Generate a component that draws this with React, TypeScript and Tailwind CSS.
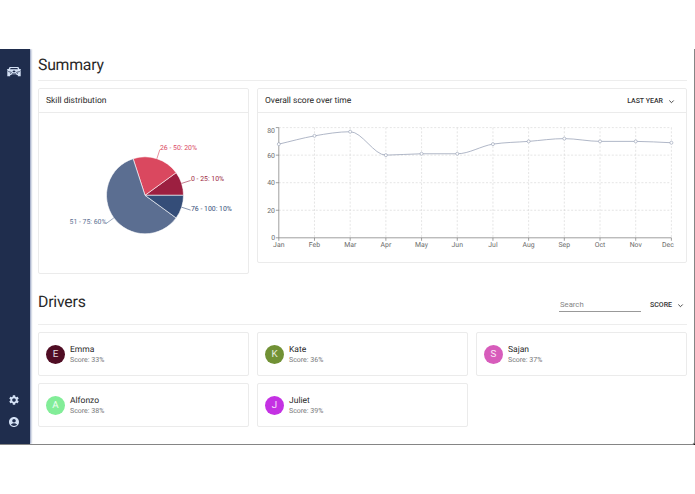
import type { FC, ReactNode } from 'react';
import { MdAccountCircle, MdSettings } from 'react-icons/md';

interface Driver {
  name: string;
  score: number;
  color: string;
}

const drivers: Driver[] = [
  { name: 'Emma', score: 33, color: 'bg-[#500d24]' },
  { name: 'Kate', score: 36, color: 'bg-[#719135]' },
  { name: 'Sajan', score: 37, color: 'bg-[#d75cbb]' },
  { name: 'Alfonzo', score: 38, color: 'bg-[#82ed98]' },
  { name: 'Juliet', score: 39, color: 'bg-[#c431e3]' },
];

const history = [
  { month: 'Jan', score: 68 },
  { month: 'Feb', score: 74 },
  { month: 'Mar', score: 77 },
  { month: 'Apr', score: 60 },
  { month: 'May', score: 61 },
  { month: 'Jun', score: 61 },
  { month: 'Jul', score: 68 },
  { month: 'Aug', score: 70 },
  { month: 'Sep', score: 72 },
  { month: 'Oct', score: 70 },
  { month: 'Nov', score: 70 },
  { month: 'Dec', score: 69 },
];

const skills = [
  { label: '0 - 25', value: 10, color: '#9c1f40', x: 152, y: 67.8, anchor: 'start' },
  { label: '26 - 50', value: 20, color: '#da485f', x: 121, y: 36.8, anchor: 'start' },
  { label: '51 - 75', value: 60, color: '#5b6e91', x: 67.5, y: 111.2, anchor: 'end' },
  { label: '76 - 100', value: 10, color: '#344d78', x: 152, y: 97.6, anchor: 'start' },
] as const;

const polar = (radius: number, percent: number) => {
  const angle = (percent / 100) * Math.PI * 2;
  return { x: 106 + radius * Math.cos(angle), y: 82.3 - radius * Math.sin(angle) };
};

const SkillChart: FC = () => {
  let total = 0;
  return (
    <svg width="209" height="160" viewBox="0 0 209 160" className="block">
      {skills.map((skill) => {
        const start = polar(38.5, total);
        const end = polar(38.5, total + skill.value);
        const edge = polar(38.5, total + skill.value / 2);
        const outer = polar(48, total + skill.value / 2);
        total += skill.value;
        return (
          <g key={skill.label}>
            <path
              d={`M106 82.3L${start.x} ${start.y}A38.5 38.5 0 ${skill.value > 50 ? 1 : 0} 0 ${end.x} ${end.y}Z`}
              fill={skill.color}
              stroke="#fff"
              strokeWidth="0.6"
            />
            <path
              d={`M${edge.x} ${edge.y}L${outer.x} ${outer.y}`}
              stroke={skill.color}
              strokeWidth="0.6"
            />
            <text
              x={skill.x}
              y={skill.y}
              textAnchor={skill.anchor}
              fill={skill.color}
              fontSize="6.9"
            >
              {`${skill.label}: ${skill.value}%`}
            </text>
          </g>
        );
      })}
    </svg>
  );
};

const LEFT = 20.8;
const TOP = 14.6;
const BOTTOM = 124.8;
const RIGHT = 413.4;
const STEP = (RIGHT - LEFT) / 11;

const points = history.map(({ score }, i) => ({
  x: LEFT + i * STEP,
  y: BOTTOM - (score / 80) * (BOTTOM - TOP),
}));

// monotone cubic interpolation
const tangents = points.map((p, i) => {
  const prev = points[i - 1];
  const next = points[i + 1];
  if (!prev || !next) return ((next ?? p).y - (prev ?? p).y) / STEP;
  const a = (p.y - prev.y) / STEP;
  const b = (next.y - p.y) / STEP;
  if (a * b <= 0) return 0;
  return Math.sign(a) * 2 * Math.min(Math.abs(a), Math.abs(b), Math.abs(a + b) / 4);
});

const linePath = points
  .map((p, i) => {
    if (i === 0) return `M${p.x} ${p.y}`;
    const prev = points[i - 1];
    const third = STEP / 3;
    return `C${prev.x + third} ${prev.y + tangents[i - 1] * third} ${p.x - third} ${p.y - tangents[i] * third} ${p.x} ${p.y}`;
  })
  .join('');

const ScoreChart: FC = () => (
  <svg width="428" height="149" viewBox="0 0 428 149" className="block">
    <g stroke="#d4d4d4" strokeWidth="0.6" strokeDasharray="2 1.7">
      {[20, 40, 60, 80].map((tick) => {
        const y = BOTTOM - (tick / 80) * (BOTTOM - TOP);
        return <path key={tick} d={`M${LEFT} ${y}H${RIGHT}`} />;
      })}
      {points.slice(1).map((p) => (
        <path key={p.x} d={`M${p.x} ${TOP}V${BOTTOM}`} />
      ))}
    </g>
    <g stroke="#777" strokeWidth="0.7" fill="none">
      <path d={`M${LEFT} ${TOP}V${BOTTOM}H${RIGHT}`} />
      {[0, 20, 40, 60, 80].map((tick) => (
        <path
          key={tick}
          d={`M${LEFT - 3} ${BOTTOM - (tick / 80) * (BOTTOM - TOP)}h3`}
        />
      ))}
      {points.map((p) => (
        <path key={p.x} d={`M${p.x} ${BOTTOM}v3`} />
      ))}
    </g>
    <g fill="#6b6b6b" fontSize="6.9">
      {[0, 20, 40, 60, 80].map((tick) => (
        <text
          key={tick}
          x="17"
          y={tick === 80 ? 19.8 : BOTTOM + 2.4 - (tick / 80) * (BOTTOM - TOP)}
          textAnchor="end"
        >
          {tick}
        </text>
      ))}
      {history.map(({ month }, i) => (
        <text
          key={month}
          x={i === 11 ? 410 : points[i].x}
          y="134"
          textAnchor="middle"
        >
          {month}
        </text>
      ))}
    </g>
    <path d={linePath} fill="none" stroke="#9ca5b9" strokeWidth="0.8" />
    {points.map((p) => (
      <circle
        key={p.x}
        cx={p.x}
        cy={p.y}
        r="1.5"
        fill="#fff"
        stroke="#939db3"
        strokeWidth="0.6"
      />
    ))}
  </svg>
);

interface PanelProps {
  title: string;
  action?: ReactNode;
  className: string;
  children: ReactNode;
}

const Panel: FC<PanelProps> = ({ title, action, className, children }) => (
  <section className={`rounded-[2px] border border-[#ebebeb] ${className}`}>
    <header className="flex h-6 items-center justify-between border-b border-[#ebebeb] pt-px pr-2.5 pl-[7px]">
      <h2 className="pt-px text-[8.5px]">{title}</h2>
      {action}
    </header>
    {children}
  </section>
);

const SortButton: FC<{ label: string }> = ({ label }) => (
  <button className="flex items-center gap-1 text-[7px] leading-3 font-medium text-[#333]">
    {label}
    <svg width="9" height="9" viewBox="0 0 9 9" fill="none">
      <path d="M2.3 3.5l2.2 2.2 2.2-2.2" stroke="currentColor" strokeWidth="0.9" />
    </svg>
  </button>
);

const CarLogo: FC = () => (
  <svg width="14" height="11" viewBox="0 0 14 11" fill="#d4e1f5">
    <path d="M2.6.9h8.8l1 2.2h1.4v1.3h-.7l.6.8v5h-2.9V9H3.2v1.2H.3v-5l.6-.8H.2V3.1h1.4z" />
    <path d="M3.6 2h6.8l.6 1.3H3z" fill="#1f2d4d" />
    <path
      d="M1.2 5.5l3.2.8-1 1.6M12.8 5.5l-3.2.8 1 1.6"
      fill="none"
      stroke="#1f2d4d"
      strokeWidth=".7"
    />
    <path d="M5.3 5.2q1.7-1.2 3.4 0L7.6 6.3H6.4zM4.2 8.8l1-1.3h3.6l1 1.3z" fill="#1f2d4d" />
  </svg>
);

const DriverCard: FC<{ driver: Driver }> = ({ driver }) => (
  <article className="flex items-center gap-[5px] rounded-[2px] border border-[#ebebeb] pl-[7px]">
    <div
      className={`flex size-[19px] items-center justify-center rounded-full pt-[2px] text-[9.8px] text-white/85 ${driver.color}`}
    >
      {driver.name[0]}
    </div>
    <div className="pt-px">
      <h3 className="text-[8.5px] leading-[12px]">{driver.name}</h3>
      <p className="text-[7px] leading-[9px] text-[#777]">Score: {driver.score}%</p>
    </div>
  </article>
);

export default function App() {
  return (
    <div className="h-[494px] w-[695px] bg-white pt-[49px] font-['Roboto',sans-serif] text-[#292929] [text-rendering:geometricPrecision]">
      <div className="bg-black">
        <div className="flex h-[396px] overflow-hidden rounded-br-[3px] border-r border-b border-[#858585] bg-white">
          <aside className="flex w-[30px] shrink-0 flex-col items-center bg-[#1f2d4d] pt-[17px] pr-0.5 pb-4 text-[#d4e1f5] shadow-[1px_0_2px_#8795b8]">
            <CarLogo />
            <div className="mt-auto flex flex-col gap-[10px]">
              <MdSettings size={12} />
              <MdAccountCircle size={12} />
            </div>
          </aside>
          <main className="flex w-[657px] shrink-0 flex-col pl-2">
            <h1 className="h-8 border-b border-[#ededed] text-[15.8px] leading-8 tracking-[-0.25px]">
              Summary
            </h1>
            <div className="mt-[7px] flex items-start gap-2">
              <Panel title="Skill distribution" className="h-[186px] w-[211px]">
                <SkillChart />
              </Panel>
              <Panel
                title="Overall score over time"
                action={<SortButton label="LAST YEAR" />}
                className="h-[175px] w-[430px]"
              >
                <ScoreChart />
              </Panel>
            </div>
            <div className="mt-4 flex h-[35px] items-start justify-between border-b border-[#ededed] pr-0.5">
              <h1 className="pt-px text-[15.8px] leading-[22px] tracking-[-0.2px]">
                Drivers
              </h1>
              <div className="mt-2 flex items-center gap-[9px]">
                <input
                  placeholder="Search"
                  className="h-[14px] w-[82px] border-b border-[#999] pl-px text-[7.7px] outline-none placeholder:text-[#858585]"
                />
                <SortButton label="SCORE" />
              </div>
            </div>
            <div className="mt-[7px] grid auto-rows-[44px] grid-cols-3 gap-x-2 gap-y-[7px]">
              {drivers.map((driver) => (
                <DriverCard key={driver.name} driver={driver} />
              ))}
            </div>
          </main>
        </div>
      </div>
    </div>
  );
}
